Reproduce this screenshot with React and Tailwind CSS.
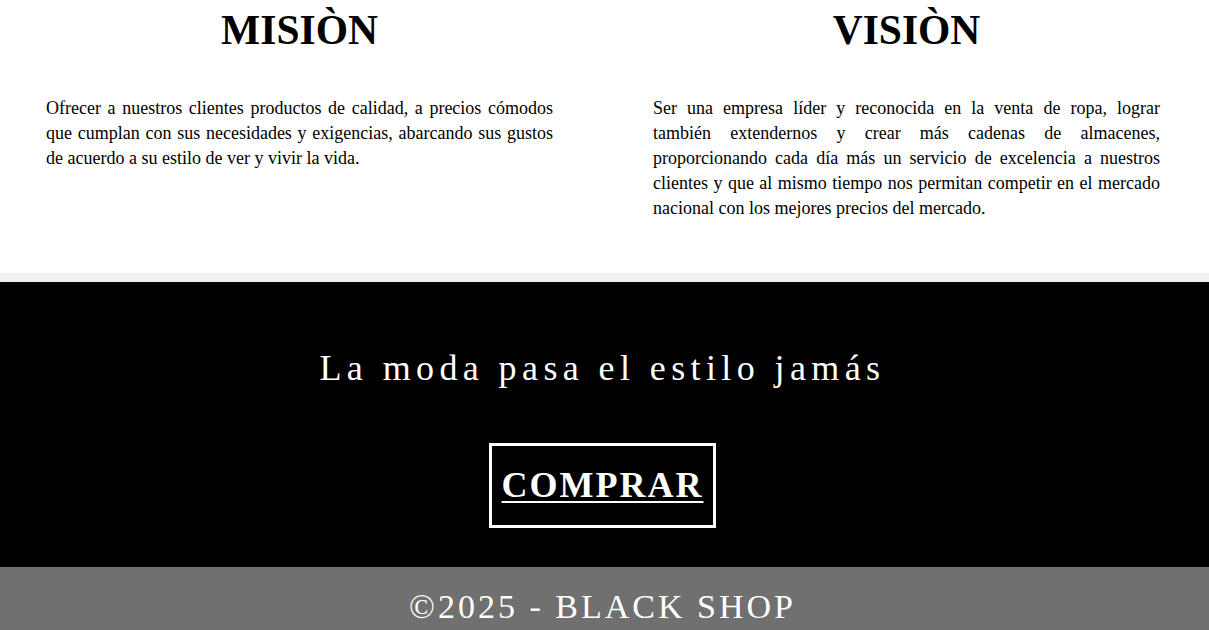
export default function App() {
  const serif = { fontFamily: '"Liberation Serif", "Times New Roman", serif' };
  return (
    <div className="w-full bg-white text-black" style={serif}>
      <section className="flex gap-[100px] pl-[46px] pt-[7px] h-[273px] bg-white">
        <div className="w-[507px] flex flex-col">
          <h1 className="text-center font-bold text-[41.5px] leading-[46.5px]">MISIÒN</h1>
          <p className="mt-[42px] text-[18px] leading-[25px] text-justify">
            Ofrecer a nuestros clientes productos de calidad, a precios cómodos que cumplan con sus necesidades y exigencias, abarcando sus gustos de acuerdo a su estilo de ver y vivir la vida.
          </p>
        </div>
        <div className="w-[507px] flex flex-col">
          <h1 className="text-center font-bold text-[41.5px] leading-[46.5px]">VISIÒN</h1>
          <p className="mt-[42px] text-[18px] leading-[25px] text-justify">
            Ser una empresa líder y reconocida en la venta de ropa, lograr también extendernos y crear más cadenas de almacenes, proporcionando cada día más un servicio de excelencia a nuestros clientes y que al mismo tiempo nos permitan competir en el mercado nacional con los mejores precios del mercado.
          </p>
        </div>
      </section>
      <div className="h-[9px] bg-[#f0f0f0]" />
      <section className="bg-black h-[285px] flex flex-col items-center pt-[66px]">
        <p className="text-white text-[36px] leading-[40px] tracking-[5.4px] mr-[4px]">La moda pasa el estilo jamás</p>
        <div className="mt-[55px] mr-[4px] border-[3px] border-white px-[10px] py-[18px]">
          <a href="#" className="block text-white font-bold text-[36px] leading-[43px] tracking-[2px] underline decoration-2 underline-offset-[4px]">COMPRAR</a>
        </div>
      </section>
      <footer className="bg-[#707070] h-[80px] pt-[21px] pr-[4px] text-center">
        <p className="text-white text-[34px] leading-[37.6px] tracking-[3px]">©2025 - BLACK SHOP</p>
      </footer>
    </div>
  );
}
